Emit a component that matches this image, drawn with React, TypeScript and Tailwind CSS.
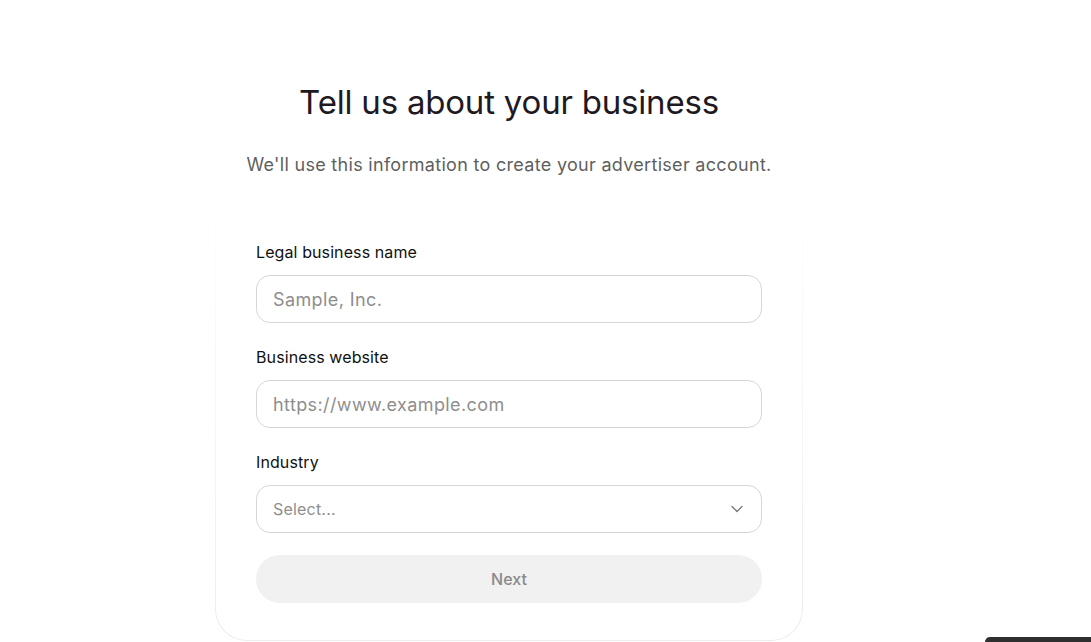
import { ChevronDown } from "lucide-react";

const fields = [
  { label: "Legal business name", placeholder: "Sample, Inc." },
  { label: "Business website", placeholder: "https://www.example.com" },
];

export default function App() {
  return (
    <div className="relative h-[642px] overflow-hidden bg-white font-['Inter',sans-serif]">
      <div className="flex justify-center pr-[73px] pt-[82px]">
        <div className="w-[588px] flex flex-col items-center">
          <h1 className="text-[33px] leading-[40px] text-[#211922] tracking-[-0.2px]">
            Tell us about your business
          </h1>
          <p className="mt-[29px] text-[18px] leading-[28px] tracking-[0.3px] text-[#5f5f5f]">
            We'll use this information to create your advertiser account.
          </p>

          <div className="mt-[9px] w-full rounded-b-[32px] bg-gradient-to-b from-white to-[#ececec] px-px pb-px">
            <div className="rounded-b-[31px] bg-white px-[40px] pt-[52px] pb-[37px]">
              {fields.map((f) => (
                <div key={f.label} className="mb-[22px]">
                  <label className="block text-[16px] leading-[24px] tracking-[0.1px] text-[#111111]">{f.label}</label>
                  <input
                    placeholder={f.placeholder}
                    className="mt-[11px] h-[48px] w-full rounded-[14px] border border-[#d6d6d6] px-[16px] text-[18px] tracking-[0.4px] text-[#111] placeholder:text-[#8e8e8e] outline-none"
                  />
                </div>
              ))}

              <div className="mb-[22px]">
                <label className="block text-[16px] leading-[24px] tracking-[0.1px] text-[#111111]">Industry</label>
                <div className="mt-[11px] flex h-[48px] w-full items-center justify-between rounded-[14px] border border-[#d6d6d6] pl-[16px] pr-[14px]">
                  <span className="text-[16px] tracking-[0.2px] text-[#8e8e8e]">Select...</span>
                  <ChevronDown size={20} strokeWidth={1.5} className="text-[#767676]" />
                </div>
              </div>

              <button className="h-[48px] w-full rounded-full bg-[#f1f1f1] text-[16px] font-medium text-[#8a8a8a]">
                Next
              </button>
            </div>
          </div>
        </div>
      </div>

      <div className="absolute bottom-0 right-0 h-[5px] w-[106px] rounded-tl-[8px] bg-[#2f2f2f]" />
    </div>
  );
}
